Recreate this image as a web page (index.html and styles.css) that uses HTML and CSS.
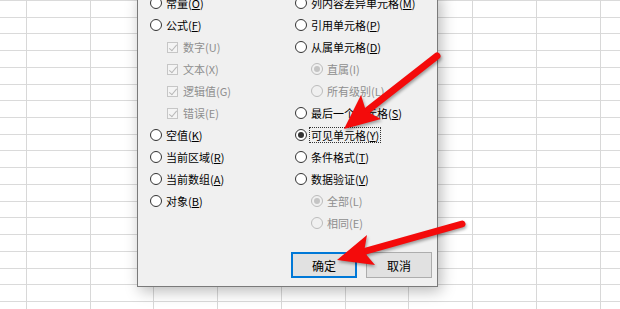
FILE: index.html
```html
<!DOCTYPE html>
<html lang="zh-CN">
<head>
    <meta charset="UTF-8">
    <title>定位条件</title>
    <link rel="stylesheet" href="styles.css">
</head>
<body>
    <div class="sheet">
        <div class="dialog">
            <div class="options">
                <div class="col">
                    <div class="opt"><span class="radio"></span><span class="txt">常量(<u>O</u>)</span></div>
                    <div class="opt"><span class="radio"></span><span class="txt">公式(<u>F</u>)</span></div>
                    <div class="opt sub off"><span class="check"></span><span class="txt">数字(U)</span></div>
                    <div class="opt sub off"><span class="check"></span><span class="txt">文本(X)</span></div>
                    <div class="opt sub off"><span class="check"></span><span class="txt">逻辑值(G)</span></div>
                    <div class="opt sub off"><span class="check"></span><span class="txt">错误(E)</span></div>
                    <div class="opt"><span class="radio"></span><span class="txt">空值(<u>K</u>)</span></div>
                    <div class="opt"><span class="radio"></span><span class="txt">当前区域(<u>R</u>)</span></div>
                    <div class="opt"><span class="radio"></span><span class="txt">当前数组(<u>A</u>)</span></div>
                    <div class="opt"><span class="radio"></span><span class="txt">对象(<u>B</u>)</span></div>
                </div>
                <div class="col">
                    <div class="opt"><span class="radio"></span><span class="txt">列内容差异单元格(<u>M</u>)</span></div>
                    <div class="opt"><span class="radio"></span><span class="txt">引用单元格(<u>P</u>)</span></div>
                    <div class="opt"><span class="radio"></span><span class="txt">从属单元格(<u>D</u>)</span></div>
                    <div class="opt sub off"><span class="radio on"></span><span class="txt">直属(I)</span></div>
                    <div class="opt sub off"><span class="radio"></span><span class="txt">所有级别(L)</span></div>
                    <div class="opt"><span class="radio"></span><span class="txt">最后一个单元格(<u>S</u>)</span></div>
                    <div class="opt"><span class="radio on"></span><span class="txt focus">可见单元格(<u>Y</u>)</span></div>
                    <div class="opt"><span class="radio"></span><span class="txt">条件格式(<u>T</u>)</span></div>
                    <div class="opt"><span class="radio"></span><span class="txt">数据验证(<u>V</u>)</span></div>
                    <div class="opt sub off"><span class="radio on"></span><span class="txt">全部(L)</span></div>
                    <div class="opt sub off"><span class="radio"></span><span class="txt">相同(E)</span></div>
                </div>
            </div>
            <div class="buttons">
                <button class="btn btn-default">确定</button>
                <button class="btn">取消</button>
            </div>
        </div>

        <svg class="arrows" width="620" height="309" viewBox="0 0 620 309">
            <g class="arrow">
                <line x1="437" y1="56" x2="368" y2="110" stroke-width="7" stroke-linecap="round"/>
                <polygon points="344,129 381,119 366,111 361,95"/>
            </g>
            <g class="arrow">
                <line x1="462" y1="224" x2="366" y2="251" stroke-width="7" stroke-linecap="round"/>
                <polygon points="337,260 367,235 364,252 375,265"/>
            </g>
        </svg>
    </div>
</body>
</html>
```

FILE: styles.css
```css
*{ padding: 0; margin: 0; box-sizing: border-box; }

body{
    width: 620px;
    height: 309px;
    overflow: hidden;
    font-family: "Noto Sans CJK SC", "Noto Sans", sans-serif;
    font-size: 11px;
    color: #000;
}

.sheet{
    position: relative;
    width: 620px;
    height: 309px;
    overflow: hidden;
    background-color: #fff;
    background-image:
        repeating-linear-gradient(to right, #d8d8d8 0 1px, transparent 1px 63.75px),
        repeating-linear-gradient(to bottom, #dadada 0 1px, transparent 1px 16.72px);
    background-position: 26px 0, 0 0;
}

/* dialog */
.dialog{
    width: 301px;
    margin: -8px 0 0 137px;
    background: #f0f0f0;
    border: 1px solid #7a7a7a;
    border-top: 0;
    box-shadow: 3px 4px 14px rgba(0,0,0,.28);
    padding: 0 5px 8px 12px;
}
.options{
    display: grid;
    grid-template-columns: 145px 1fr;
}
.opt{
    display: flex;
    align-items: center;
    height: 22px;
    white-space: nowrap;
}
.opt.sub{ padding-left: 16px; }
.opt.off .txt{ color: #8e8e8e; }

.txt{
    line-height: 14px;
    padding: 0 1px;
    border: 1px solid transparent;
}
.txt.focus{ border: 1px dotted #333; }
.txt u{ text-underline-offset: 1px; }

.radio{
    position: relative;
    flex: none;
    width: 12px;
    height: 12px;
    border: 1px solid #333;
    border-radius: 50%;
    background: #fff;
    margin-right: 2px;
}
.radio.on::after{
    content: "";
    position: absolute;
    left: 2px;
    top: 2px;
    width: 6px;
    height: 6px;
    border-radius: 50%;
    background: #333;
}
.off .radio{
    border-color: #bcbcbc;
    background: #f0f0f0;
}
.off .radio.on::after{ background: #c4c4c4; }

.check{
    position: relative;
    flex: none;
    width: 11px;
    height: 11px;
    border: 1px solid #c6c6c6;
    background: #f4f4f4;
    margin: 0 3px 0 1px;
}
.check::after{
    content: "";
    position: absolute;
    left: 3px;
    top: 0;
    width: 3px;
    height: 7px;
    border: solid #b8b8b8;
    border-width: 0 1px 1px 0;
    transform: rotate(40deg);
}

.buttons{
    display: flex;
    justify-content: flex-end;
    gap: 9px;
    margin-top: 18px;
}
.btn{
    width: 66px;
    height: 26px;
    font: inherit;
    font-size: 12px;
    color: #000;
    background: #e1e1e1;
    border: 1px solid #adadad;
}
.btn-default{
    border-color: #0078d7;
    box-shadow: inset 0 0 0 1px #0078d7;
}

/* annotation arrows over the screenshot */
.arrows{
    position: absolute;
    left: 0;
    top: 0;
    filter: drop-shadow(1px 2px 1.5px rgba(0,0,0,.35));
}
.arrow line{ stroke: #f40b0b; }
.arrow polygon{ fill: #f40b0b; }
```
